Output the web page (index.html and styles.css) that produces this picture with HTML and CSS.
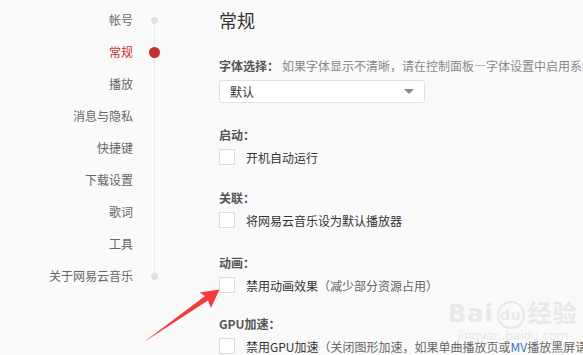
FILE: index.html
```html
<!DOCTYPE html>
<html lang="zh">
<head>
<meta charset="utf-8">
<link rel="stylesheet" href="styles.css">
</head>
<body>
<div class="page">
  <nav class="nav">
    <div class="item first"><span class="label">帐号</span><span class="rail"><i class="dot"></i></span></div>
    <div class="item active"><span class="label">常规</span><span class="rail"><i class="dot big"></i></span></div>
    <div class="item"><span class="label">播放</span><span class="rail"></span></div>
    <div class="item"><span class="label">消息与隐私</span><span class="rail"></span></div>
    <div class="item"><span class="label">快捷键</span><span class="rail"></span></div>
    <div class="item"><span class="label">下载设置</span><span class="rail"></span></div>
    <div class="item"><span class="label">歌词</span><span class="rail"></span></div>
    <div class="item"><span class="label">工具</span><span class="rail"></span></div>
    <div class="item last"><span class="label">关于网易云音乐</span><span class="rail"><i class="dot"></i></span></div>
  </nav>
  <main class="content">
    <h1 class="title">常规</h1>
    <section class="sec s1">
      <div class="head">字体选择：<span class="desc">如果字体显示不清晰，请在控制面板—字体设置中启用系统ClearType设置</span></div>
      <div class="select"><span>默认</span><i class="caret"></i></div>
    </section>
    <section class="sec s2">
      <div class="head">启动：</div>
      <label class="check"><span class="box"></span>开机自动运行</label>
    </section>
    <section class="sec s3">
      <div class="head">关联：</div>
      <label class="check"><span class="box"></span>将网易云音乐设为默认播放器</label>
    </section>
    <section class="sec s4">
      <div class="head">动画：</div>
      <label class="check"><span class="box"></span>禁用动画效果<span class="note">（减少部分资源占用）</span></label>
    </section>
    <section class="sec s5">
      <div class="head">GPU加速：</div>
      <label class="check"><span class="box"></span>禁用GPU加速<span class="note">（关闭图形加速，如果单曲播放页或<span class="mv">MV</span>播放黑屏请尝试）</span></label>
    </section>
  </main>
</div>
<div class="watermark"><div class="wm1">Bai<span class="du">du</span>经验</div><div class="wm2">jingyan.baidu.com</div></div>
<svg class="arrow" width="583" height="355" viewBox="0 0 583 355">
  <polygon points="144,342 208,300.5 211,308 219.5,289.5 199.5,292.5 205,296" fill="#f23c3c"/>
</svg>
</body>
</html>
```
FILE: styles.css
```css
html, body {
  margin: 0;
  padding: 0;
  width: 583px;
  height: 355px;
  overflow: hidden;
  background: #fafafa;
  font-family: "Noto Sans CJK SC", "Noto Sans", sans-serif;
  font-size: 12px;
  color: #333;
}
.page {
  display: flex;
  align-items: flex-start;
}
.nav {
  display: flex;
  flex-direction: column;
  padding-top: 4px;
}
.item {
  display: flex;
  height: 32px;
  align-items: stretch;
}
.label {
  width: 133px;
  text-align: right;
  line-height: 32px;
  color: #666;
  white-space: nowrap;
}
.item.active .label { color: #c62f2f; }
.rail {
  width: 43px;
  display: flex;
  align-items: center;
  justify-content: center;
  background-image: repeating-linear-gradient(to bottom, #dcdcdc 0 1px, transparent 1px 2px);
  background-size: 1px 100%;
  background-repeat: no-repeat;
  background-position: 21px 0;
}
.item.first .rail { background-size: 1px 50%; background-position: 21px 100%; }
.item.last .rail { background-size: 1px 50%; background-position: 21px 0; }
.dot {
  display: block;
  width: 7px;
  height: 7px;
  border-radius: 50%;
  background: #e0e0e0;
}
.dot.big {
  width: 11px;
  height: 11px;
  background: #c62f2f;
}
.content {
  margin-left: 43px;
  white-space: nowrap;
}
.title {
  margin: 8px 0 0;
  font-size: 18px;
  line-height: 24px;
  font-weight: normal;
  color: #333;
}
.sec { margin-top: 22px; }
.sec.s1 { margin-top: 24px; }
.sec.s3 { margin-top: 23px; }
.sec.s4 { margin-top: 25px; }
.sec.s5 { margin-top: 21px; }
.head {
  font-weight: bold;
  line-height: 20px;
  color: #555;
}
.desc {
  font-weight: normal;
  color: #888;
  margin-left: 3px;
}
.select {
  margin-top: 4px;
  width: 184px;
  height: 21px;
  border: 1px solid #e1e1e1;
  border-radius: 3px;
  background: #fff;
  display: flex;
  align-items: center;
  justify-content: space-between;
  padding: 0 10px;
  margin-bottom: 2px;
  color: #333;
}
.caret {
  width: 0;
  height: 0;
  border-left: 5px solid transparent;
  border-right: 5px solid transparent;
  border-top: 5px solid #888;
}
.check {
  display: flex;
  align-items: center;
  height: 16px;
  margin-top: 4px;
  color: #333;
}
.box {
  width: 14px;
  height: 14px;
  border: 1px solid #ddd;
  background: #fff;
  margin-right: 11px;
  flex: none;
}
.note { color: #666; }
.mv { color: #3a6fc4; }
.watermark {
  position: absolute;
  left: 448px;
  top: 300px;
  color: #e9e9e9;
  font-family: "DejaVu Sans", "Noto Sans CJK SC", sans-serif;
  text-align: center;
  pointer-events: none;
}
.wm1 { font-size: 24px; font-weight: bold; line-height: 28px; letter-spacing: 1px; }
.du {
  display: inline-block;
  font-size: 14px;
  width: 24px;
  height: 24px;
  line-height: 24px;
  border-radius: 50%;
  border: 2px solid #e9e9e9;
  vertical-align: middle;
  margin: 0 3px;
}
.wm2 { font-size: 12px; line-height: 14px; }
.arrow {
  position: absolute;
  left: 0;
  top: 0;
  pointer-events: none;
}
```
